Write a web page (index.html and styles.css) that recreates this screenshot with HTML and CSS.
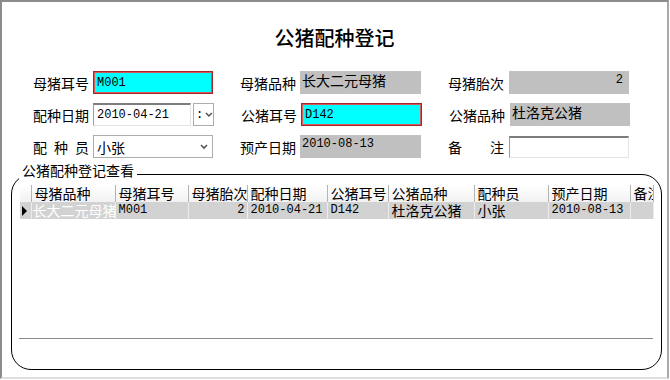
FILE: index.html
```html
<!DOCTYPE html>
<html lang="zh">
<head>
    <meta charset="UTF-8">
    <title>公猪配种登记</title>
    <link rel="stylesheet" href="styles.css">
</head>
<body>
    <div class="window">
        <h1 class="title">公猪配种登记</h1>

        <div class="form">
            <div class="form-row">
                <div class="field">
                    <label>母猪耳号</label>
                    <div class="box box-key w120">M001</div>
                </div>
                <div class="field">
                    <label>母猪品种</label>
                    <div class="box box-read w121 cjk">长大二元母猪</div>
                </div>
                <div class="field wide-gap">
                    <label>母猪胎次</label>
                    <div class="box box-read w120 num">2</div>
                </div>
            </div>

            <div class="form-row">
                <div class="field">
                    <label>配种日期</label>
                    <div class="date-picker">
                        <div class="box box-sunken date-text">2010-04-21</div>
                        <div class="drop-btn">
                            <span class="colon">:</span>
                            <svg class="chevron" width="8" height="6" viewBox="0 0 8 6"><polyline points="1,1 4,4 7,1" fill="none" stroke="#555" stroke-width="1.6"/></svg>
                        </div>
                    </div>
                </div>
                <div class="field">
                    <label>公猪耳号</label>
                    <div class="box box-key w121">D142</div>
                </div>
                <div class="field wide-gap">
                    <label>公猪品种</label>
                    <div class="box box-read w120 cjk">杜洛克公猪</div>
                </div>
            </div>

            <div class="form-row">
                <div class="field">
                    <label>配种员</label>
                    <div class="combo w120">
                        <span class="cjk">小张</span>
                        <svg class="chevron" width="8" height="6" viewBox="0 0 8 6"><polyline points="1,1 4,4 7,1" fill="none" stroke="#555" stroke-width="1.6"/></svg>
                    </div>
                </div>
                <div class="field">
                    <label>预产日期</label>
                    <div class="box box-read w121">2010-08-13</div>
                </div>
                <div class="field wide-gap">
                    <label>备注</label>
                    <div class="box box-sunken w120 memo"></div>
                </div>
            </div>
        </div>

        <fieldset class="group">
            <legend>公猪配种登记查看</legend>
            <div class="grid">
                <table>
                    <colgroup>
                        <col class="col-ind">
                        <col class="col-sow-breed">
                        <col class="col-sow-ear">
                        <col class="col-parity">
                        <col class="col-date">
                        <col class="col-boar-ear">
                        <col class="col-boar-breed">
                        <col class="col-staff">
                        <col class="col-due">
                        <col class="col-memo">
                    </colgroup>
                    <thead>
                        <tr>
                            <th></th>
                            <th>母猪品种</th>
                            <th>母猪耳号</th>
                            <th>母猪胎次</th>
                            <th>配种日期</th>
                            <th>公猪耳号</th>
                            <th>公猪品种</th>
                            <th>配种员</th>
                            <th>预产日期</th>
                            <th>备注</th>
                        </tr>
                    </thead>
                    <tbody>
                        <tr>
                            <td class="ind"><span class="arrow"></span></td>
                            <td class="cjk selected">长大二元母猪</td>
                            <td>M001</td>
                            <td class="num">2</td>
                            <td>2010-04-21</td>
                            <td>D142</td>
                            <td class="cjk">杜洛克公猪</td>
                            <td class="cjk">小张</td>
                            <td>2010-08-13</td>
                            <td></td>
                        </tr>
                    </tbody>
                </table>
            </div>
        </fieldset>
    </div>
</body>
</html>
```

FILE: styles.css
```css
body {
    margin: 0;
    padding: 0;
    background: #fff;
    font-family: 'Noto Sans CJK SC', sans-serif;
    color: #000;
}

.window {
    width: 669px;
    height: 379px;
    box-sizing: border-box;
    border-top: 2px solid #8c8c8c;
    border-left: 2px solid #8c8c8c;
    border-right: 2px solid #a8a8a8;
    border-bottom: 2px solid #dedede;
    background: #fff;
}

.title {
    margin: 0;
    padding-top: 22px;
    font-size: 20px;
    line-height: 28px;
    font-weight: 500;
    text-align: center;
}

/* 表单区 */
.form {
    margin-top: 19px;
    padding-left: 31px;
    display: flex;
    flex-direction: column;
    gap: 9px;
}

.form-row {
    display: flex;
    gap: 27px;
}

.field {
    display: flex;
    align-items: center;
    gap: 4px;
}

.field.wide-gap {
    gap: 5px;
}

.field label {
    width: 56px;
    font-size: 14px;
    line-height: 16px;
    text-align: justify;
    text-align-last: justify;
}

.box {
    box-sizing: border-box;
    height: 23px;
    padding: 0 3px;
    font-family: 'Liberation Mono', 'Noto Sans CJK SC', monospace;
    font-size: 12px;
    line-height: 16px;
    white-space: nowrap;
    overflow: hidden;
}

.w120 { width: 120px; }
.w121 { width: 121px; }

.cjk {
    font-family: 'Noto Sans CJK SC', sans-serif;
    font-size: 14px;
}

.box-key {
    background: #00ffff;
    border: 1px solid #a8262a;
    box-shadow: inset 0 0 0 1px #d25a5a;
    display: flex;
    align-items: center;
}

.box-read {
    background: #c0c0c0;
    padding: 1px 2px 0;
}

.box-read.num {
    text-align: right;
    padding-right: 6px;
}

.box-sunken {
    background: #fff;
    border-top: 2px solid #7c7c7c;
    border-left: 1px solid #9c9c9c;
    border-right: 1px solid #e4e4e4;
    border-bottom: 1px solid #e4e4e4;
    display: flex;
    align-items: center;
}

.memo {
    height: 22px;
}

.date-picker {
    display: flex;
    gap: 2px;
}

.date-text {
    width: 98px;
}

.drop-btn,
.combo {
    box-sizing: border-box;
    height: 23px;
    border: 1px solid #acacac;
    background: #fff;
    display: flex;
    align-items: center;
}

.drop-btn {
    width: 21px;
    padding-left: 2px;
    gap: 2px;
}

.colon {
    font-family: 'Liberation Mono', monospace;
    font-size: 12px;
}

.combo {
    justify-content: space-between;
    padding: 0 4px 0 3px;
}

.chevron {
    display: block;
}

/* 查看分组 */
.group {
    box-sizing: border-box;
    width: 651px;
    margin: 8px 0 0 9px;
    padding: 3px 8px 30px 7px;
    border: 1px solid #000;
    border-radius: 20px;
    min-width: 0;
}

.group legend {
    position: relative;
    top: -4px;
    padding: 0 3px;
    font-size: 14px;
    line-height: 16px;
}

.grid {
    height: 154px;
    box-sizing: border-box;
    border-bottom: 1px solid #8a8a8a;
    background: #fff;
}

.grid table {
    width: 633px;
    margin-left: 1px;
    border-collapse: collapse;
    table-layout: fixed;
}

.col-ind { width: 11px; }
.col-sow-breed { width: 84px; }
.col-sow-ear { width: 73px; }
.col-parity { width: 59px; }
.col-date { width: 80px; }
.col-boar-ear { width: 61px; }
.col-boar-breed { width: 86px; }
.col-staff { width: 74px; }
.col-due { width: 82px; }
.col-memo { width: 23px; }

.grid th {
    height: 17px;
    padding: 0 2px 0 3px;
    font-size: 14px;
    font-weight: normal;
    line-height: 17px;
    text-align: left;
    white-space: nowrap;
    overflow-x: clip;
    overflow-y: visible;
    background: linear-gradient(#ffffff, #f1f1f1);
    border-right: 1px solid #b4b4b4;
}

.grid td {
    height: 17px;
    padding: 0 2px 0 3px;
    font-family: 'Liberation Mono', 'Noto Sans CJK SC', monospace;
    font-size: 12px;
    line-height: 17px;
    white-space: nowrap;
    overflow-x: clip;
    overflow-y: visible;
    background: #d2d2d2;
    border-right: 1px solid #ececec;
}

.grid td.cjk {
    font-family: 'Noto Sans CJK SC', sans-serif;
    font-size: 14px;
}

.grid td.num {
    text-align: right;
}

.grid td.selected {
    color: #fff;
    padding-left: 1px;
    overflow: visible;
}

.grid td.ind {
    padding: 0 0 0 2px;
}

.arrow {
    display: block;
    width: 0;
    height: 0;
    border-left: 5px solid #000;
    border-top: 5px solid transparent;
    border-bottom: 5px solid transparent;
}
```
